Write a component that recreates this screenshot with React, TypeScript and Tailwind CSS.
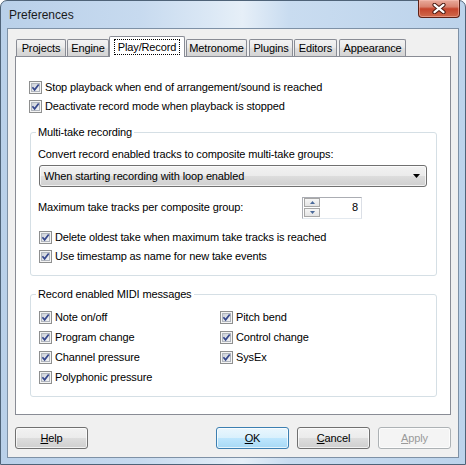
import React from "react";

function Check() {
  return (
    <svg width="13" height="13" viewBox="0 0 13 13" className="shrink-0">
      <defs>
        <linearGradient id="cbg" x1="0" y1="0" x2="1" y2="1">
          <stop offset="0" stopColor="#c9ced6" />
          <stop offset="1" stopColor="#f7f7f7" />
        </linearGradient>
      </defs>
      <rect x="0.5" y="0.5" width="12" height="12" fill="#f4f4f4" stroke="#8e8f8f" />
      <rect x="2.5" y="2.5" width="8" height="8" fill="url(#cbg)" stroke="#b0b5bd" />
      <path d="M3.4 6.3 L5.6 8.8 L9.7 3.4" fill="none" stroke="#36478c" strokeWidth="1.7" />
    </svg>
  );
}

function CheckRow({ label, h = "h-[19px]" }: { label: string; h?: string }) {
  return (
    <div className={`flex items-center gap-[3px] ${h}`}>
      <Check />
      <span className="whitespace-nowrap">{label}</span>
    </div>
  );
}

function Btn({
  children,
  kind = "normal",
}: {
  children: React.ReactNode;
  kind?: "normal" | "default" | "disabled";
}) {
  const cls =
    kind === "default"
      ? "border-[#3c7fb1] bg-[linear-gradient(180deg,#eaf6fd_0%,#d9f0fc_50%,#bee6fd_50%,#a7d9f5_100%)] text-black"
      : kind === "disabled"
      ? "border-[#adb2b5] bg-[#f4f4f4] text-[#9a9a9a]"
      : "border-[#707070] bg-[linear-gradient(180deg,#f2f2f2_0%,#ebebeb_50%,#dddddd_50%,#cfcfcf_100%)] text-black";
  return (
    <div
      className={`w-[73px] h-[22px] rounded-[3px] border flex items-center justify-center shadow-[inset_0_0_0_1px_rgba(255,255,255,0.7)] ${cls}`}
    >
      {children}
    </div>
  );
}

const tabs: { name: string; w: string; ml: string; sel?: boolean }[] = [
  { name: "Projects", w: "w-[50px]", ml: "ml-[1px]" },
  { name: "Engine", w: "w-[42px]", ml: "ml-[1px]" },
  { name: "Play/Record", w: "w-[76px]", ml: "ml-0", sel: true },
  { name: "Metronome", w: "w-[61px]", ml: "ml-[1px]" },
  { name: "Plugins", w: "w-[44px]", ml: "ml-[2px]" },
  { name: "Editors", w: "w-[43px]", ml: "ml-[1px]" },
  { name: "Appearance", w: "w-[67px]", ml: "ml-[2px]" },
];

export default function App() {
  return (
    <div className="w-[466px] h-[465px] font-['Liberation_Sans',Arial,sans-serif] text-[11px] leading-[13px] tracking-[-0.13px] text-black">
      <div className="w-[466px] h-[465px] rounded-t-[7px] border border-[#4f6378] bg-[linear-gradient(90deg,#b9d0e9_0%,#c7daef_30%,#dbe8f5_45%,#e6eff8_52%,#c9dcf0_62%,#bcd3eb_100%)] flex flex-col">
        {/* Title bar */}
        <div className="h-[27px] flex items-start justify-between">
          <span className="ml-[8px] mt-[7px] text-[12px] leading-[14px] tracking-normal text-[#1a1a1a]">Preferences</span>
          <div className="mr-[5px] -mt-[1px] w-[42px] h-[18px] rounded-b-[4px] border border-t-0 border-[#5e2116] bg-[linear-gradient(180deg,#e9ab9c_0%,#d9826f_40%,#c5442c_52%,#cf6a4c_100%)] flex items-center justify-center shadow-[inset_0_0_0_1px_rgba(255,200,190,0.45)]">
            <svg width="14" height="11" viewBox="0 0 14 11">
              <path d="M2.5 1.8 L11.5 9.2 M11.5 1.8 L2.5 9.2" stroke="#4a1a12" strokeWidth="4.2" strokeLinecap="round" />
              <path d="M2.5 1.8 L11.5 9.2 M11.5 1.8 L2.5 9.2" stroke="#ffffff" strokeWidth="2.2" strokeLinecap="round" />
            </svg>
          </div>
        </div>

        {/* Client area */}
        <div className="mx-[6px] h-[430px] border border-[#7e91a6] bg-[#f0f0f0] flex flex-col">
          {/* Tab control */}
          <div className="mt-[7px] ml-[7px] w-[436px] flex flex-col">
            <div className="h-[20px] flex items-end">
              {tabs.map((t) =>
                t.sel ? (
                  <div
                    key={t.name}
                    className={`${t.w} ${t.ml} h-[21px] -mb-[1px] relative z-10 bg-white border border-b-0 border-[#898c95] rounded-t-[2px] flex items-start justify-center pt-[2px]`}
                  >
                    <span className="border border-dotted border-black px-[3px] h-[16px] flex items-center">{t.name}</span>
                  </div>
                ) : (
                  <div
                    key={t.name}
                    className={`${t.w} ${t.ml} h-[17px] border border-b-0 border-[#898c95] rounded-t-[2px] bg-[linear-gradient(180deg,#f3f3f3_0%,#ebebeb_45%,#dedede_55%,#d4d4d4_100%)] flex items-center justify-center pt-[1px]`}
                  >
                    {t.name}
                  </div>
                )
              )}
            </div>
            <div className="h-[359px] border border-[#898c95] bg-white flex flex-col">
              <div className="mt-[21px] ml-[13px]">
                <CheckRow label="Stop playback when end of arrangement/sound is reached" />
                <CheckRow label="Deactivate record mode when playback is stopped" />
              </div>

              {/* Group 1 */}
              <fieldset className="mt-[10px] ml-[14px] w-[407px] border border-[#d5dfe5] rounded-[3px] pl-[8px] pb-[9px]">
                <legend className="-ml-[3px] px-[2px] h-[13px] leading-[13px]">Multi-take recording</legend>
                <div className="pt-[6px] h-[24px] flex items-center">
                  <span className="-ml-[1px]">Convert record enabled tracks to composite multi-take groups:</span>
                </div>
                <div className="mt-[2px] w-[388px] h-[22px] rounded-[3px] border border-[#707070] bg-[linear-gradient(180deg,#f2f2f2_0%,#ebebeb_50%,#dddddd_50%,#cfcfcf_100%)] shadow-[inset_0_0_0_1px_rgba(255,255,255,0.7)] flex items-center justify-between pl-[4px] pr-[6px]">
                  <span>When starting recording with loop enabled</span>
                  <svg width="7" height="4" viewBox="0 0 7 4">
                    <path d="M0 0 H7 L3.5 4 Z" fill="#000" />
                  </svg>
                </div>
                <div className="mt-[9px] w-[323px] h-[23px] flex items-center justify-between">
                  <span className="-ml-[1px]">Maximum take tracks per composite group:</span>
                  <div className="w-[60px] h-[22px] border border-[#abadb3] border-r-[#dbdfe6] border-b-[#e3e9ef] bg-white flex items-center pl-[1px] pr-[3px]">
                    <div className="flex flex-col gap-[1px]">
                      {[0, 1].map((i) => (
                        <div
                          key={i}
                          className="w-[16px] h-[9px] border border-[#a7a7a7] bg-[linear-gradient(180deg,#f6f6f6_0%,#e4e4e4_100%)] flex items-center justify-center"
                        >
                          <svg width="5" height="3" viewBox="0 0 5 3">
                            <path d={i === 0 ? "M0 3 H5 L2.5 0 Z" : "M0 0 H5 L2.5 3 Z"} fill="#4b6a9a" />
                          </svg>
                        </div>
                      ))}
                    </div>
                    <span className="flex-1 text-right">8</span>
                  </div>
                </div>
                <div className="mt-[9px]">
                  <CheckRow label="Delete oldest take when maximum take tracks is reached" />
                  <CheckRow label="Use timestamp as name for new take events" />
                </div>
              </fieldset>

              {/* Group 2 */}
              <fieldset className="mt-[12px] ml-[14px] w-[407px] border border-[#d5dfe5] rounded-[3px] pl-[8px] pb-[9px]">
                <legend className="-ml-[3px] px-[2px] h-[13px] leading-[13px]">Record enabled MIDI messages</legend>
                <div className="pt-[6px] flex">
                  <div className="w-[181px] flex flex-col">
                    <CheckRow h="h-[20px]" label="Note on/off" />
                    <CheckRow h="h-[20px]" label="Program change" />
                    <CheckRow h="h-[20px]" label="Channel pressure" />
                    <CheckRow h="h-[20px]" label="Polyphonic pressure" />
                  </div>
                  <div className="flex flex-col">
                    <CheckRow h="h-[20px]" label="Pitch bend" />
                    <CheckRow h="h-[20px]" label="Control change" />
                    <CheckRow h="h-[20px]" label="SysEx" />
                  </div>
                </div>
              </fieldset>
            </div>
          </div>

          {/* Buttons */}
          <div className="mt-[12px] mx-[7px] flex items-center">
            <Btn>
              <span><u>H</u>elp</span>
            </Btn>
            <div className="flex-1" />
            <div className="flex gap-[8px]">
              <Btn kind="default">
                <span><u>O</u>K</span>
              </Btn>
              <Btn>
                <span><u>C</u>ancel</span>
              </Btn>
              <Btn kind="disabled">
                <span><u>A</u>pply</span>
              </Btn>
            </div>
          </div>
        </div>
      </div>
    </div>
  );
}
